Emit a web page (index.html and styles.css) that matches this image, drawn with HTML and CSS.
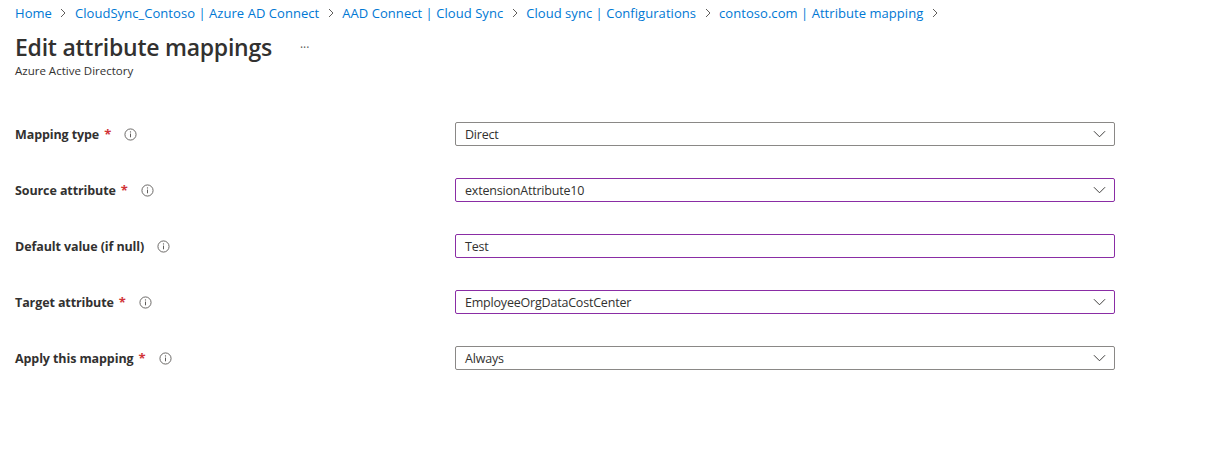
FILE: index.html
```html
<!DOCTYPE html>
<html>
<head>
<meta charset="utf-8">
<link rel="stylesheet" href="styles.css">
</head>
<body>
<div class="page">
  <nav class="crumbs">
    <a>Home</a><span class="sep"><svg viewBox="0 0 8 10" width="8" height="10"><path d="M2 1l4 4-4 4" fill="none" stroke="#605e5c" stroke-width="1"/></svg></span>
    <a>CloudSync_Contoso | Azure AD Connect</a><span class="sep"><svg viewBox="0 0 8 10" width="8" height="10"><path d="M2 1l4 4-4 4" fill="none" stroke="#605e5c" stroke-width="1"/></svg></span>
    <a>AAD Connect | Cloud Sync</a><span class="sep"><svg viewBox="0 0 8 10" width="8" height="10"><path d="M2 1l4 4-4 4" fill="none" stroke="#605e5c" stroke-width="1"/></svg></span>
    <a>Cloud sync | Configurations</a><span class="sep"><svg viewBox="0 0 8 10" width="8" height="10"><path d="M2 1l4 4-4 4" fill="none" stroke="#605e5c" stroke-width="1"/></svg></span>
    <a>contoso.com | Attribute mapping</a><span class="sep"><svg viewBox="0 0 8 10" width="8" height="10"><path d="M2 1l4 4-4 4" fill="none" stroke="#605e5c" stroke-width="1"/></svg></span>
  </nav>
  <header class="head">
    <div class="title-row">
      <h1>Edit attribute mappings</h1>
      <span class="more">···</span>
    </div>
    <div class="subtitle">Azure Active Directory</div>
  </header>

  <form class="form">
    <div class="row">
      <div class="label"><b>Mapping type</b><span class="req">*</span><span class="info"><svg viewBox="0 0 14 14" width="13" height="13"><circle cx="7" cy="7" r="6" fill="none" stroke="#605e5c" stroke-width="1"/><path d="M7 6v4" stroke="#605e5c" stroke-width="1.1"/><circle cx="7" cy="4.2" r="0.7" fill="#605e5c"/></svg></span></div>
      <div class="field gray"><span>Direct</span><svg class="chev" viewBox="0 0 14 8" width="13" height="8"><path d="M1 1l6 6 6-6" fill="none" stroke="#323130" stroke-width="1"/></svg></div>
    </div>
    <div class="row">
      <div class="label"><b>Source attribute</b><span class="req">*</span><span class="info"><svg viewBox="0 0 14 14" width="13" height="13"><circle cx="7" cy="7" r="6" fill="none" stroke="#605e5c" stroke-width="1"/><path d="M7 6v4" stroke="#605e5c" stroke-width="1.1"/><circle cx="7" cy="4.2" r="0.7" fill="#605e5c"/></svg></span></div>
      <div class="field purple"><span>extensionAttribute10</span><svg class="chev" viewBox="0 0 14 8" width="13" height="8"><path d="M1 1l6 6 6-6" fill="none" stroke="#323130" stroke-width="1"/></svg></div>
    </div>
    <div class="row">
      <div class="label"><b>Default value (if null)</b><span class="info"><svg viewBox="0 0 14 14" width="13" height="13"><circle cx="7" cy="7" r="6" fill="none" stroke="#605e5c" stroke-width="1"/><path d="M7 6v4" stroke="#605e5c" stroke-width="1.1"/><circle cx="7" cy="4.2" r="0.7" fill="#605e5c"/></svg></span></div>
      <div class="field purple"><span>Test</span></div>
    </div>
    <div class="row">
      <div class="label"><b>Target attribute</b><span class="req">*</span><span class="info"><svg viewBox="0 0 14 14" width="13" height="13"><circle cx="7" cy="7" r="6" fill="none" stroke="#605e5c" stroke-width="1"/><path d="M7 6v4" stroke="#605e5c" stroke-width="1.1"/><circle cx="7" cy="4.2" r="0.7" fill="#605e5c"/></svg></span></div>
      <div class="field purple"><span>EmployeeOrgDataCostCenter</span><svg class="chev" viewBox="0 0 14 8" width="13" height="8"><path d="M1 1l6 6 6-6" fill="none" stroke="#323130" stroke-width="1"/></svg></div>
    </div>
    <div class="row">
      <div class="label"><b>Apply this mapping</b><span class="req">*</span><span class="info"><svg viewBox="0 0 14 14" width="13" height="13"><circle cx="7" cy="7" r="6" fill="none" stroke="#605e5c" stroke-width="1"/><path d="M7 6v4" stroke="#605e5c" stroke-width="1.1"/><circle cx="7" cy="4.2" r="0.7" fill="#605e5c"/></svg></span></div>
      <div class="field gray"><span>Always</span><svg class="chev" viewBox="0 0 14 8" width="13" height="8"><path d="M1 1l6 6 6-6" fill="none" stroke="#323130" stroke-width="1"/></svg></div>
    </div>
  </form>
</div>
</body>
</html>
```
FILE: styles.css
```css
html, body {
  margin: 0;
  padding: 0;
  background: #ffffff;
}
body {
  font-family: "Open Sans", "Noto Sans", "Liberation Sans", sans-serif;
  color: #323130;
  font-size: 13px;
}
.page {
  padding: 3px 15px 0 15px;
}
.crumbs {
  display: flex;
  align-items: center;
  height: 20px;
  font-size: 13px;
  letter-spacing: 0.05px;
}
.crumbs a {
  color: #0078d4;
  text-decoration: none;
}
.sep {
  display: inline-flex;
  width: 23px;
  justify-content: center;
  align-items: center;
}
.head {
  margin-top: 9px;
}
.title-row {
  display: flex;
  align-items: center;
  height: 30px;
}
h1 {
  margin: 0;
  font-size: 23px;
  font-weight: 600;
  color: #323130;
  letter-spacing: -0.25px;
  line-height: 30px;
}
.more {
  margin-left: 28px;
  font-size: 12px;
  color: #605e5c;
  letter-spacing: 0;
  position: relative;
  top: 0;
}
.subtitle {
  font-size: 11.5px;
  color: #323130;
  margin-top: 1px;
  letter-spacing: 0;
}
.form {
  margin-top: 44px;
  display: flex;
  flex-direction: column;
  gap: 32px;
}
.row {
  display: flex;
  align-items: center;
  height: 24px;
}
.label {
  width: 440px;
  flex: none;
  display: flex;
  align-items: center;
}
.label b {
  font-weight: 700;
  font-size: 12.5px;
  letter-spacing: -0.1px;
}
.req {
  color: #d13438;
  font-weight: 700;
  margin-left: 5px;
}
.info {
  margin-left: 13px;
  display: inline-flex;
}
.field {
  width: 660px;
  height: 24px;
  box-sizing: border-box;
  border: 1px solid #8a8886;
  border-radius: 2px;
  display: flex;
  align-items: center;
  justify-content: space-between;
  padding: 0 8px 0 9px;
  font-size: 12.5px;
  letter-spacing: -0.2px;
}
.field.purple {
  border-color: #8a2da5;
}
.chev {
  margin-right: 0;
}
```
